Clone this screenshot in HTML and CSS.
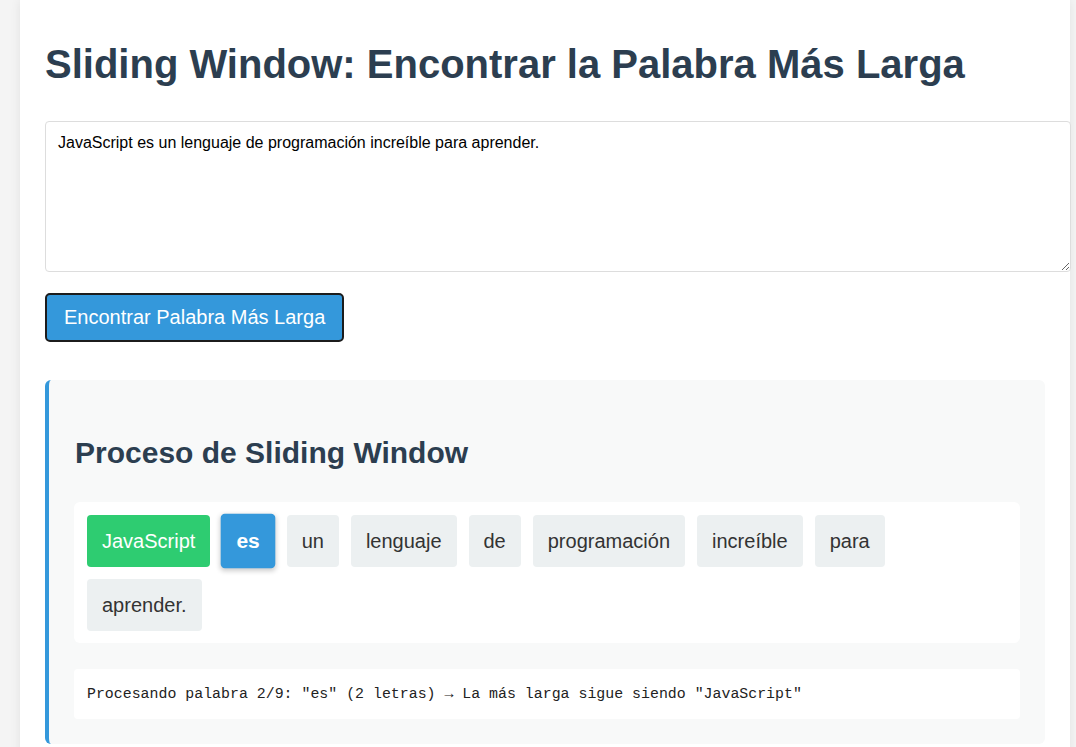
FILE: index.html
```html
<!DOCTYPE html>
<html lang="es">
<head>
<meta charset="utf-8">
<title>Sliding Window</title>
<link rel="stylesheet" href="styles.css">
</head>
<body>
<div class="container">
  <h1 class="title">Sliding Window: Encontrar la Palabra Más Larga</h1>
  <textarea class="input">JavaScript es un lenguaje de programación increíble para aprender.</textarea>
  <button class="btn">Encontrar Palabra Más Larga</button>
  <div class="result">
    <h2 class="result-title">Proceso de Sliding Window</h2>
    <div class="words">
      <span class="word longest">JavaScript</span>
      <span class="word active">es</span>
      <span class="word">un</span>
      <span class="word">lenguaje</span>
      <span class="word">de</span>
      <span class="word">programación</span>
      <span class="word">increíble</span>
      <span class="word">para</span>
      <span class="word">aprender.</span>
    </div>
    <div class="status">Procesando palabra 2/9: "es" (2 letras) → La más larga sigue siendo "JavaScript"</div>
  </div>
</div>
</body>
</html>
```
FILE: styles.css
```css
html, body {
  margin: 0;
  padding: 0;
}
body {
  background: #f4f4f4;
  font-family: "Liberation Sans", Arial, sans-serif;
  color: #333;
}
.container {
  width: 1050px;
  box-sizing: border-box;
  margin-left: 20px;
  background: #fff;
  padding: 1px 25px 40px;
  box-shadow: 0 0 10px rgba(0,0,0,0.08);
  min-height: 747px;
}
.title {
  margin: 40px 0 34px;
  font-size: 40px;
  line-height: 46px;
  font-weight: bold;
  color: #2c3e50;
}
.input {
  display: block;
  width: 1026px;
  height: 151px;
  box-sizing: border-box;
  padding: 12px;
  border: 1px solid #ddd;
  border-radius: 4px;
  font-family: "Liberation Sans", Arial, sans-serif;
  font-size: 16px;
  color: #000;
  resize: vertical;
  margin: 0;
}
.btn {
  display: block;
  margin-top: 21px;
  height: 49px;
  padding: 0 17px;
  background: #3498db;
  color: #fff;
  border: 2px solid #1c1c1c;
  border-radius: 5px;
  font-family: "Liberation Sans", Arial, sans-serif;
  font-size: 20px;
}
.result {
  margin-top: 38px;
  width: 1000px;
  box-sizing: border-box;
  background: #f8f9f9;
  border-left: 4px solid #3498db;
  border-radius: 6px;
  padding: 25px 25px 25px 25px;
}
.result-title {
  margin: 31px 0 32px 1px;
  font-size: 30px;
  line-height: 34px;
  color: #2c3e50;
}
.words {
  background: #fff;
  border-radius: 6px;
  padding: 13px 12px 12px 13px;
  display: flex;
  flex-wrap: wrap;
  gap: 12px;
}
.word {
  display: inline-block;
  padding: 15px 15px;
  line-height: 22px;
  font-size: 20px;
  background: #ecf0f1;
  border-radius: 4px;
  color: #333;
}
.word.longest {
  background: #2ecc71;
  color: #fff;
}
.word.active {
  background: #3498db;
  color: #fff;
  font-weight: bold;
  transform: scale(1.05);
  box-shadow: 0 2px 5px rgba(0,0,0,0.2);
}
.status {
  margin-top: 26px;
  background: #fff;
  border-radius: 4px;
  padding: 15px 13px;
  font-family: "Liberation Mono", "DejaVu Sans Mono", monospace;
  font-size: 14.9px;
  line-height: 20px;
  color: #222;
}
```
